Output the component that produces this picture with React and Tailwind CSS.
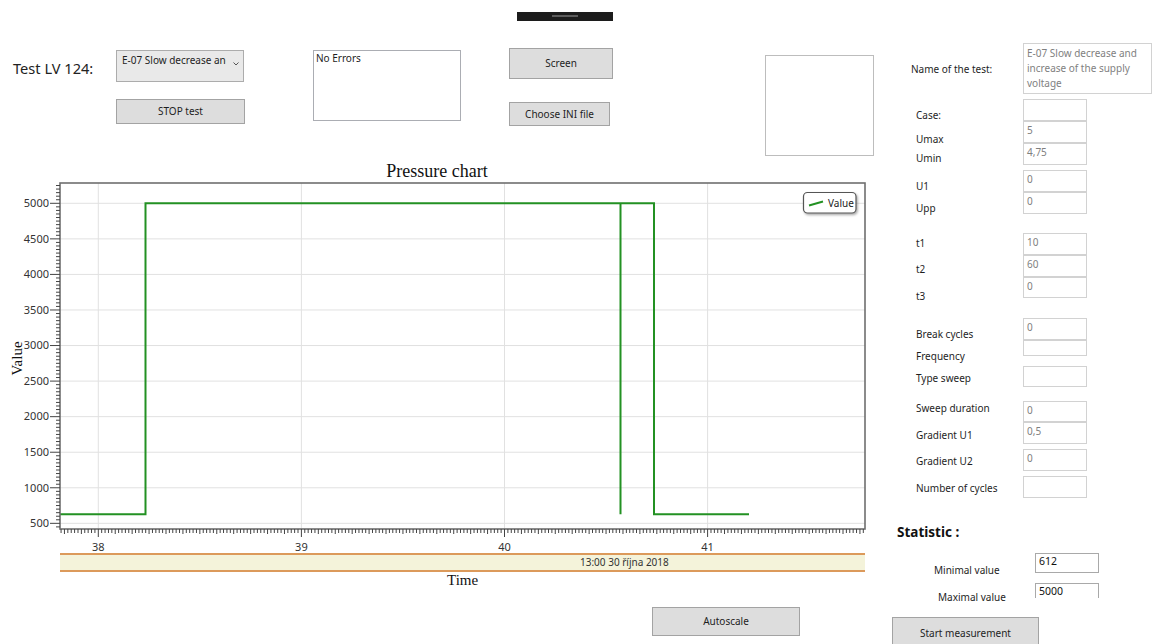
import React from "react";

// Chart geometry (svg coordinates; the svg sits 180px below the page top)
const Y5000 = 23.3;
const KY = 0.07112;
const X38 = 98.3;
const KX = 203.1;
const PL = 60;
const PR = 865;
const PT = 3;
const PB = 349;

const yOf = (v) => Y5000 + (5000 - v) * KY;
const xOf = (t) => X38 + (t - 38) * KX;

function PressureChart() {
  const yTicks = [];
  for (let v = 450; v <= 5250; v += 50) {
    const y = yOf(v);
    if (y >= PT && y <= PB) yTicks.push({ v, y, major: v % 500 === 0 });
  }
  const xTicks = [];
  for (let i = Math.ceil(37.811 * 60); i <= Math.floor(41.775 * 60); i++) {
    xTicks.push({ i, x: xOf(i / 60), major: i % 60 === 0, mid: i % 5 === 0 });
  }
  const low = 334.2;
  const high = Y5000;
  const series = `M${PL} ${low} H145.5 V${high} H620.5 V${low} V${high} H654 V${low} H749`;
  const sans = "Noto Sans, sans-serif";

  return (
    <svg width="880" height="373" className="block">
      <defs>
        <filter id="legendShadow" x="-20%" y="-40%" width="150%" height="200%">
          <feDropShadow dx="1.2" dy="1.5" stdDeviation="1" floodColor="#000" floodOpacity="0.35" />
        </filter>
      </defs>

      {/* grid */}
      {yTicks.filter((t) => t.major).map((t) => (
        <line key={"gy" + t.v} x1={PL} x2={PR} y1={t.y} y2={t.y} stroke="#e1e1e1" strokeWidth="1" />
      ))}
      {xTicks.filter((t) => t.major).map((t) => (
        <line key={"gx" + t.i} x1={t.x} x2={t.x} y1={PT} y2={PB} stroke="#e1e1e1" strokeWidth="1" />
      ))}

      {/* series */}
      <path d={series} fill="none" stroke="#239123" strokeWidth="2" />

      {/* frame */}
      <rect x={PL} y={PT} width={PR - PL} height={PB - PT} fill="none" stroke="#6f6f6f" strokeWidth="1.6" />

      {/* y axis ticks + labels */}
      {yTicks.map((t) => (
        <line key={"ty" + t.v} x1={t.major ? 50 : 56} x2={PL} y1={t.y} y2={t.y} stroke="#444" strokeWidth="1" />
      ))}
      {yTicks.filter((t) => t.major).map((t) => (
        <text key={"ly" + t.v} x="49" y={t.y + 3.8} textAnchor="end" fontFamily={sans} fontSize="11" fill="#333">
          {t.v}
        </text>
      ))}

      {/* x axis ticks + labels */}
      {xTicks.map((t) => (
        <line
          key={"tx" + t.i}
          x1={t.x}
          x2={t.x}
          y1={PB}
          y2={PB + (t.major ? 8 : t.mid ? 5 : 4)}
          stroke="#444"
          strokeWidth="1"
        />
      ))}
      {xTicks.filter((t) => t.major).map((t) => (
        <text key={"lx" + t.i} x={t.x} y="370.7" textAnchor="middle" fontFamily={sans} fontSize="11" fill="#333">
          {t.i / 60}
        </text>
      ))}

      {/* axis title */}
      <text
        x="22"
        y="178.5"
        transform="rotate(-90 22 178.5)"
        textAnchor="middle"
        fontFamily="Liberation Serif, serif"
        fontSize="15"
        fill="#111"
      >
        Value
      </text>

      {/* legend */}
      <rect x="803.5" y="12.5" width="52.5" height="20.5" rx="4" fill="#fff" stroke="#555" strokeWidth="1.2" filter="url(#legendShadow)" />
      <line x1="809" y1="25.5" x2="823" y2="21.5" stroke="#239123" strokeWidth="2" />
      <text x="828" y="27.3" fontFamily={sans} fontSize="10" fill="#222">
        Value
      </text>
    </svg>
  );
}

function Field({ className = "", children }) {
  return (
    <div className={"border border-[#d2d2d2] bg-white pl-[3px] pt-[1px] text-[10px] leading-[15px] text-[#7f7f7f] " + className}>
      {children}
    </div>
  );
}

function Label({ className = "", children }) {
  return <div className={"h-[15px] text-[10px] leading-[15px] text-[#1e1e1e] whitespace-nowrap " + className}>{children}</div>;
}

function Button({ className = "", children }) {
  return (
    <div
      className={
        "flex items-center justify-center border border-[#a3a3a3] bg-[#dddddd] text-[10px] leading-[15px] text-[#1e1e1e] " + className
      }
    >
      {children}
    </div>
  );
}

function ParamsPanel() {
  return (
    <div className="w-[276px] shrink-0 flex flex-col">
      <div className="flex items-start h-[498px] shrink-0">
        {/* labels */}
        <div className="w-[112px] pl-[31px] flex flex-col">
          <Label className="mt-[62px]">Name of the test:</Label>
          <Label className="mt-[31px] ml-[5px]">Case:</Label>
          <Label className="mt-[9px] ml-[5px]">Umax</Label>
          <Label className="mt-[4px] ml-[5px]">Umin</Label>
          <Label className="mt-[13px] ml-[5px]">U1</Label>
          <Label className="mt-[7px] ml-[5px]">Upp</Label>
          <Label className="mt-[20px] ml-[5px]">t1</Label>
          <Label className="mt-[11px] ml-[5px]">t2</Label>
          <Label className="mt-[12px] ml-[5px]">t3</Label>
          <Label className="mt-[23px] ml-[5px]">Break cycles</Label>
          <Label className="mt-[7px] ml-[5px]">Frequency</Label>
          <Label className="mt-[7px] ml-[5px]">Type sweep</Label>
          <Label className="mt-[15px] ml-[5px]">Sweep duration</Label>
          <Label className="mt-[12px] ml-[5px]">Gradient U1</Label>
          <Label className="mt-[11px] ml-[5px]">Gradient U2</Label>
          <Label className="mt-[12px] ml-[5px]">Number of cycles</Label>
        </div>
        {/* inputs */}
        <div className="ml-[31px] flex flex-col pt-[43px]">
          <Field className="w-[129px] h-[51px] leading-[14px] pt-[2px] whitespace-nowrap">
            E-07 Slow decrease and
            <br />
            increase of the supply
            <br />
            voltage
          </Field>
          <Field className="mt-[5px] w-[64px] h-[22px]" />
          <Field className="w-[64px] h-[22px]">5</Field>
          <Field className="w-[64px] h-[22px]">4,75</Field>
          <Field className="mt-[5px] w-[64px] h-[22px]">0</Field>
          <Field className="w-[64px] h-[22px]">0</Field>
          <Field className="mt-[19px] w-[64px] h-[22px]">10</Field>
          <Field className="w-[64px] h-[22px]">60</Field>
          <Field className="w-[64px] h-[21px]">0</Field>
          <Field className="mt-[20px] w-[64px] h-[22px]">0</Field>
          <Field className="w-[64px] h-[16px]" />
          <Field className="mt-[10px] w-[64px] h-[21px]" />
          <Field className="mt-[14px] w-[64px] h-[21px]">0</Field>
          <Field className="w-[64px] h-[22px]">0,5</Field>
          <Field className="mt-[5px] w-[64px] h-[22px]">0</Field>
          <Field className="mt-[5px] w-[64px] h-[22px]" />
        </div>
      </div>

      {/* statistics */}
      <div className="mt-[25px] h-[18px] shrink-0 pl-[17px] text-[13.5px] leading-[18px] font-bold text-[#111]">Statistic :</div>
      <div className="mt-[12px] h-[20px] shrink-0 pl-[54px] flex items-start">
        <Label className="w-[101px] mt-[10px]">Minimal value</Label>
        <div className="w-[64px] h-[20px] border border-[#a9a9a9] pl-[3px] text-[10.5px] leading-[15px] text-[#111]">612</div>
      </div>
      <div className="mt-[10px] h-[15px] shrink-0 pl-[58px] flex items-start">
        <Label className="w-[97px] mt-[7px]">Maximal value</Label>
        <div className="w-[64px] h-[15px] border-t border-x border-[#a9a9a9] pl-[3px] text-[10.5px] leading-[15px] text-[#111] overflow-hidden">
          5000
        </div>
      </div>
      <Button className="mt-[19px] ml-[12px] w-[147px] h-[32px] shrink-0">Start measurement</Button>
    </div>
  );
}

export default function App() {
  return (
    <div className="w-[1156px] h-[644px] bg-white overflow-hidden flex font-['Noto_Sans',sans-serif] text-[#1e1e1e]">
      <div className="w-[880px] shrink-0 flex flex-col">
        {/* window grip */}
        <div className="mt-[12px] ml-[517px] w-[96px] h-[9px] bg-[#1c1c1c] flex justify-center pt-[3px]">
          <div className="w-[26px] h-[2px] bg-[#5c5c5c]" />
        </div>

        {/* controls row */}
        <div className="mt-[27px] h-[108px] flex items-start">
          <div className="ml-[13px] w-[103px] mt-[10px] text-[14.6px] leading-[20px] text-[#222] whitespace-nowrap">Test LV 124:</div>

          <div className="w-[129px] flex flex-col">
            <div className="mt-[2px] w-[128px] h-[32px] border border-[#acacac] bg-[#e9e9e9] flex items-start pl-[5px] pt-[2px]">
              <div className="w-[104px] overflow-hidden whitespace-nowrap text-[10px] leading-[15px]">E-07 Slow decrease and increase</div>
              <svg width="6" height="4" className="ml-[7px] mt-[9px]" viewBox="0 0 6 4">
                <path d="M0.5 0.5 L3 3 L5.5 0.5" fill="none" stroke="#555" strokeWidth="1" />
              </svg>
            </div>
            <Button className="mt-[17px] w-[129px] h-[25px]">STOP test</Button>
          </div>

          <div className="ml-[68px] mt-[2px] w-[148px] h-[71px] border border-[#abadb3] bg-white pl-[2px] text-[10px] leading-[15px]">
            No Errors
          </div>

          <div className="ml-[48px] flex flex-col">
            <Button className="w-[104px] h-[31px]">Screen</Button>
            <Button className="mt-[23px] w-[101px] h-[24px]">Choose INI file</Button>
          </div>

          <div className="ml-[152px] mt-[7px] w-[109px] h-[101px] border border-[#bdbdbd] bg-white" />
        </div>

        {/* chart */}
        <div className="mt-[6px] w-[874px] text-center font-['Liberation_Serif',serif] text-[18px] leading-[18px] text-[#111]">
          Pressure chart
        </div>
        <PressureChart />
        <div className="ml-[60px] w-[805px] h-[19px] border-y-2 border-[#dc9a5b] bg-[#f4f3da] pl-[520px] text-[10px] leading-[15px] text-[#333] whitespace-nowrap">
          13:00 30 října 2018
        </div>
        <div className="ml-[447px] font-['Liberation_Serif',serif] text-[15px] leading-[17px] text-[#111]">Time</div>

        <Button className="mt-[18px] ml-[652px] w-[148px] h-[29px]">Autoscale</Button>
      </div>

      <ParamsPanel />
    </div>
  );
}
